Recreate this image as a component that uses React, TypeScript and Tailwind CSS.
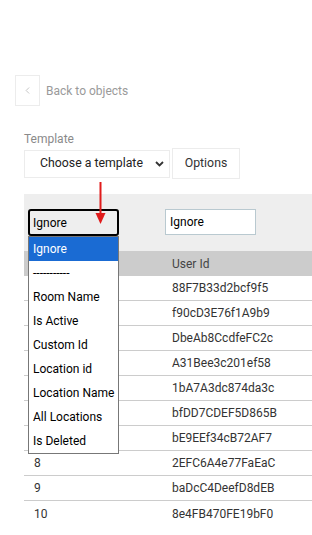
import { FiChevronLeft } from 'react-icons/fi'

const rows = [
  ['1', '88F7B33d2bcf9f5'],
  ['2', 'f90cD3E76f1A9b9'],
  ['3', 'DbeAb8CcdfeFC2c'],
  ['4', 'A31Bee3c201ef58'],
  ['5', '1bA7A3dc874da3c'],
  ['6', 'bfDD7CDEF5D865B'],
  ['7', 'bE9EEf34cB72AF7'],
  ['8', '2EFC6A4e77FaEaC'],
  ['9', 'baDcC4DeefD8dEB'],
  ['10', '8e4FB470FE19bF0'],
]

const options = [
  'Ignore',
  '-----------',
  'Room Name',
  'Is Active',
  'Custom Id',
  'Location id',
  'Location Name',
  'All Locations',
  'Is Deleted',
]

const App = () => (
  <div className="relative w-[312px] h-[535px] overflow-hidden bg-white font-['Roboto',sans-serif] text-[12px]">
    <div className="flex items-center gap-[6px] pt-[75px] pl-[15px]">
      <div className="w-[25px] h-[31px] border border-[#ececec] flex items-center justify-center text-[#aaa]">
        <FiChevronLeft size={11} strokeWidth={1.5} />
      </div>
      <span className="text-[#9a9a9a] text-[12px]">Back to objects</span>
    </div>

    <div className="pl-[24px] pt-[26px]">
      <div className="text-[#8a8a8a] leading-[14px]">Template</div>
      <div className="flex items-center gap-[2px] mt-[2px]">
        <div className="w-[146px] h-[28px] border border-[#ececec] flex items-center justify-between pl-[15px] pr-[5px] text-[#222] text-[12.3px]">
          <span>Choose a template</span>
          <svg width="9" height="6" viewBox="0 0 9 6">
            <path d="M1 1l3.5 3.5L8 1" stroke="#333" strokeWidth="1.8" fill="none" />
          </svg>
        </div>
        <div className="w-[68px] h-[31px] border border-[#ececec] flex items-center justify-center text-[#333] text-[12.3px]">
          Options
        </div>
      </div>
    </div>

    <div className="ml-[24px] mt-[15px] w-[320px]">
      <div className="bg-[#eeeeee] grid grid-cols-[137px_1fr] pt-[15px] pb-[15px]">
        <div className="pl-[4px]">
          <div className="w-[91px] h-[27px] border-2 border-black rounded-[3px] flex items-center pl-[3px] text-black">
            Ignore
          </div>
        </div>
        <div className="pl-[4px]">
          <div className="w-[91px] h-[26px] border border-[#b9c9d0] bg-white flex items-center pl-[4px] text-black">
            Ignore
          </div>
        </div>
      </div>
      <div className="bg-[#cccccc] grid grid-cols-[137px_1fr] h-[25px] items-center text-[#444]">
        <div className="pl-[10px]"></div>
        <div className="pl-[11px]">User Id</div>
      </div>
      {rows.map(([n, id], i) => (
        <div
          key={n}
          className={`grid grid-cols-[137px_1fr] h-[25px] items-center text-[#333] ${
            i < rows.length - 1 ? 'border-b border-[#cccccc]' : ''
          }`}
        >
          <div className="pl-[10px]">{n}</div>
          <div className="pl-[11px]">{id}</div>
        </div>
      ))}
    </div>

    <svg className="absolute left-[95px] top-[182px]" width="12" height="43" viewBox="0 0 12 43">
      <line x1="5.5" y1="0" x2="5.5" y2="32" stroke="#e01b1b" strokeWidth="2" />
      <path d="M0.5 31h10L5.5 42z" fill="#e01b1b" />
    </svg>

    <div className="absolute left-[28px] top-[236px] w-[91px] border border-[#777] bg-white">
      {options.map((o, i) => (
        <div
          key={o}
          className={`h-[24px] flex items-center pl-[4px] ${
            i === 0 ? 'bg-[#1a6bd3] text-white' : 'text-black'
          }`}
        >
          {o}
        </div>
      ))}
    </div>
  </div>
)

export default App
